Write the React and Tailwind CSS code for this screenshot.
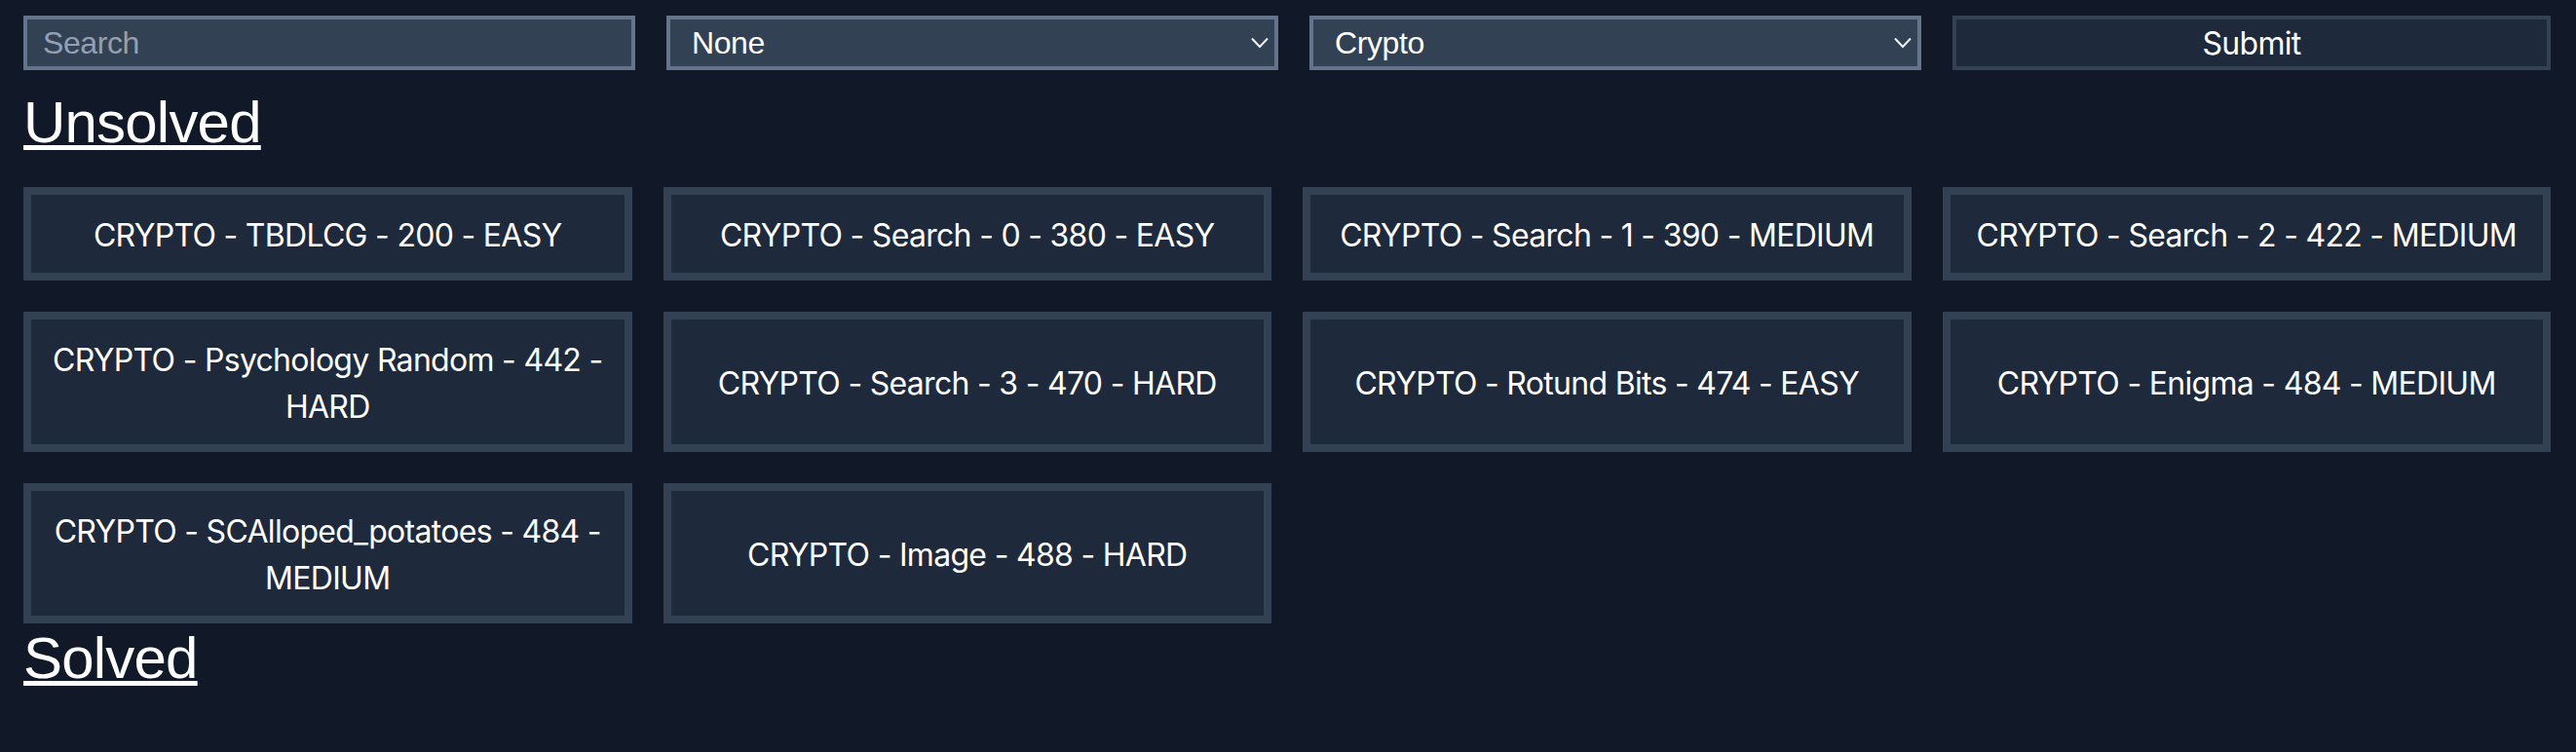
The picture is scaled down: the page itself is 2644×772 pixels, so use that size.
import React, { useState } from 'react';

const challenges = [
  'CRYPTO - TBDLCG - 200 - EASY',
  'CRYPTO - Search - 0 - 380 - EASY',
  'CRYPTO - Search - 1 - 390 - MEDIUM',
  'CRYPTO - Search - 2 - 422 - MEDIUM',
  'CRYPTO - Psychology Random - 442 - HARD',
  'CRYPTO - Search - 3 - 470 - HARD',
  'CRYPTO - Rotund Bits - 474 - EASY',
  'CRYPTO - Enigma - 484 - MEDIUM',
  'CRYPTO - SCAlloped_potatoes - 484 - MEDIUM',
  'CRYPTO - Image - 488 - HARD',
];

const Chevron = () => (
  <svg
    className="pointer-events-none absolute right-[10px] top-1/2 -translate-y-1/2"
    width="18"
    height="11"
    viewBox="0 0 18 11"
    fill="none"
  >
    <polyline points="1,1 9,9.5 17,1" stroke="#f1f5f9" strokeWidth="2" />
  </svg>
);

const App = () => {
  const [filters, setFilters] = useState({ search: '', difficulty: 'None', category: 'Crypto' });

  const handleChange = (e) => {
    setFilters({ ...filters, [e.target.name]: e.target.value });
  };

  const handleSubmit = (e) => {
    e.preventDefault();
  };

  return (
    <div className="min-h-screen bg-[#111827] pl-6 pr-[26px] pt-4 text-white font-['Liberation_Sans',Arial,sans-serif]">
      <form className="grid grid-cols-[628px_628px_628px_1fr] gap-8" onSubmit={handleSubmit}>
        <input
          type="text"
          name="search"
          value={filters.search}
          onChange={handleChange}
          placeholder="Search"
          className="h-[56px] border-4 border-[#64748b] bg-[#334155] px-4 text-[32px] leading-[48px] tracking-[-0.4px] text-white outline-none placeholder:text-[#94a0b0]"
        />
        <div className="relative">
          <select
            name="difficulty"
            value={filters.difficulty}
            onChange={handleChange}
            className="h-[56px] w-full appearance-none border-4 border-[#64748b] bg-[#334155] pl-[22px] text-[32px] leading-[48px] tracking-[-0.4px] text-white outline-none"
          >
            <option value="None">None</option>
            <option value="Easy">Easy</option>
            <option value="Medium">Medium</option>
            <option value="Hard">Hard</option>
          </select>
          <Chevron />
        </div>
        <div className="relative">
          <select
            name="category"
            value={filters.category}
            onChange={handleChange}
            className="h-[56px] w-full appearance-none border-4 border-[#64748b] bg-[#334155] pl-[22px] text-[32px] leading-[48px] tracking-[-0.4px] text-white outline-none"
          >
            <option value="Crypto">Crypto</option>
            <option value="Web">Web</option>
            <option value="Pwn">Pwn</option>
          </select>
          <Chevron />
        </div>
        <button
          type="submit"
          className="h-[56px] border-4 border-[#334155] bg-[#1e293b] pt-[2px] text-center text-[32px] leading-[44px] tracking-[-0.7px] text-white font-['Inter',sans-serif]"
        >
          Submit
        </button>
      </form>

      <h2 className="mt-[18px] w-fit text-[60px] leading-[72px] tracking-[-0.8px] underline decoration-[5px] underline-offset-[3px]">
        Unsolved
      </h2>
      <div className="mt-[30px] grid grid-cols-4 gap-8">
        {challenges.map((c) => (
          <div
            key={c}
            className="flex items-center justify-center border-8 border-[#334155] bg-[#1e293b] px-4 pt-[18px] pb-[14px] text-center text-[32px] leading-[48px] tracking-[-0.7px] font-['Inter',sans-serif]"
          >
            {c}
          </div>
        ))}
      </div>
      <h2 className="w-fit text-[60px] leading-[72px] tracking-[-0.8px] underline decoration-[5px] underline-offset-[3px]">
        Solved
      </h2>
    </div>
  );
};

export default App;
